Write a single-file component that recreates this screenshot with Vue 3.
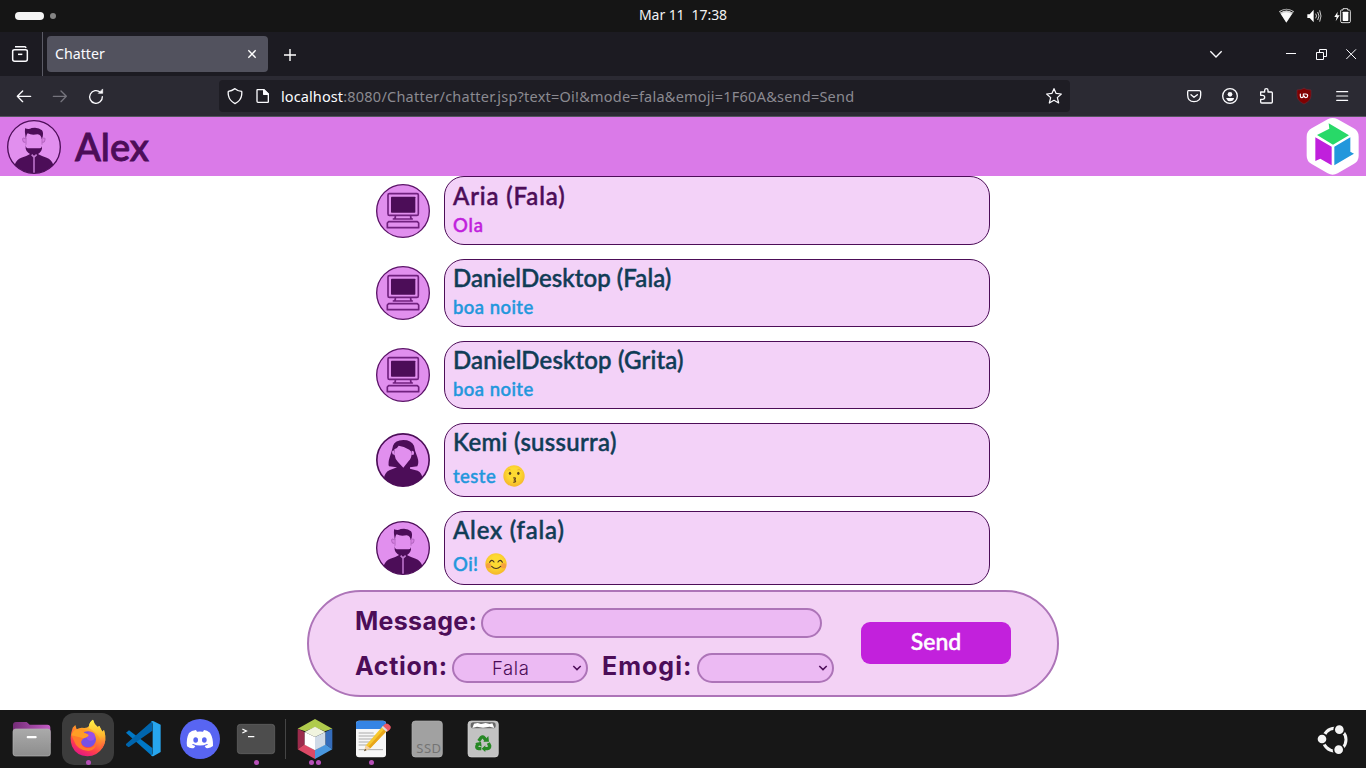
<script setup>
const messages = [
  { who: 'Aria (Fala)', text: 'Ola', avatar: 'pc', tone: 'own', fit: 'aria', size: 'first' },
  { who: 'DanielDesktop (Fala)', text: 'boa noite', avatar: 'pc', tone: 'other', fit: 'dfala', size: 'short' },
  { who: 'DanielDesktop (Grita)', text: 'boa noite', avatar: 'pc', tone: 'other', fit: 'dgrita', size: 'short' },
  { who: 'Kemi (sussurra)', text: 'teste', avatar: 'woman', tone: 'other', fit: 'kemi', size: 'tall', emoji: 'kiss' },
  { who: 'Alex (fala)', text: 'Oi!', avatar: 'man', tone: 'other', fit: 'alex', size: 'tall', emoji: 'smile' },
]
</script>

<template>
  <div class="desktop">
    <svg class="defs" width="0" height="0">
      <defs>
        <symbol id="pc" viewBox="0 0 162 162">
          <circle cx="81" cy="81" r="79" fill="#e18fee" stroke="#5b1268" stroke-width="4" />
          <g fill="none" stroke="#71217f" stroke-width="5" stroke-linejoin="round">
            <path d="M40 29H123Q127 29 127 33V89Q127 94 123 94H40Q36 94 36 89V33Q36 29 40 29Z" />
            <path d="M58 95V99Q58 105 52 105H109Q104 105 104 99V95M52 105H110" />
            <path d="M38 113H124L128 117V131H34V117Z" />
          </g>
          <rect x="45" y="38" width="73" height="48" rx="2" fill="#4c0d58" />
        </symbol>
        <symbol id="man" viewBox="0 0 162 162">
          <clipPath id="mc"><circle cx="81" cy="81" r="79" /></clipPath>
          <circle cx="81" cy="81" r="79" fill="#e18fee" />
          <g clip-path="url(#mc)">
            <path d="M68 96H94V103Q104 109 119 113Q133 118 138 132L144 162H18L24 132Q29 118 43 113Q60 108 68 103Z" fill="#4c0d58" />
            <path d="M55 46Q53 35 54 25Q66 30 74 24Q94 20 105 31Q110 37 107 51L104 58Q103 44 92 43Q73 47 62 40Q57 45 57 59Z" fill="#4c0d58" />
            <path d="M54 56Q46 50 47 60Q48 69 55 67M107 56Q115 50 114 60Q113 69 106 67" fill="#d67fe2" stroke="#a055ad" stroke-width="2" />
            <path d="M56 72Q56 86 64 85H97Q106 86 105 72V86Q101 103 82 104Q60 103 56 86Z" fill="#4c0d58" />
            <path d="M57 54V74M105 54V74" stroke="#a055ad" stroke-width="2" />
            <path d="M74 104L81 111L89 104M81 111V162" fill="none" stroke="#c078ce" stroke-width="5" />
            <path d="M81 112V162" stroke="#853893" stroke-width="1" />
          </g>
          <circle cx="81" cy="81" r="79" fill="none" stroke="#4c0d58" stroke-width="4" />
        </symbol>
        <symbol id="woman" viewBox="0 0 162 162">
          <clipPath id="wc"><circle cx="81" cy="81" r="79" /></clipPath>
          <circle cx="81" cy="81" r="78" fill="#e18fee" />
          <g clip-path="url(#wc)">
            <path d="M39 100Q35 91 42 70Q49 49 51 38Q57 22 82 21Q106 21 114 38Q116 52 124 72Q130 90 124 100L102 103V107L125 113Q138 119 139 136L146 162H18L24 136Q26 119 40 112L63 103Z" fill="#4c0d58" />
            <path d="M55 49Q64 46 68 38Q83 40 100 50Q107 54 107 62Q106 77 98 84L82 104L66 87Q57 78 55 63Z" fill="#e18fee" />
            <path d="M53 52Q45 54 50 64L57 66M107 53Q117 53 113 65L106 66" fill="#dc8cea" />
          </g>
          <circle cx="81" cy="81" r="78.5" fill="none" stroke="#4c0d58" stroke-width="5" />
        </symbol>
        <radialGradient id="yellow" cx=".5" cy=".4" r=".62">
          <stop offset=".45" stop-color="#fdda32" /><stop offset="1" stop-color="#f4b42a" />
        </radialGradient>
        <symbol id="kiss" viewBox="0 0 66 66">
          <circle cx="33" cy="33" r="32" fill="url(#yellow)" />
          <path d="M14 17Q18 11 23 15M43 15Q49 11 53 17" fill="none" stroke="#e0a52a" stroke-width="2" />
          <ellipse cx="21" cy="25" rx="3.6" ry="5" fill="#5a4320" /><ellipse cx="46" cy="25" rx="3.6" ry="5" fill="#5a4320" />
          <path d="M31 39Q38 37 37 42L34 45Q40 48 36 51L31 52" fill="none" stroke="#68451d" stroke-width="4" />
        </symbol>
        <symbol id="smile" viewBox="0 0 66 66">
          <circle cx="33" cy="33" r="32" fill="url(#yellow)" />
          <circle cx="11" cy="38" r="8" fill="#f58a45" opacity=".65" /><circle cx="55" cy="38" r="8" fill="#f58a45" opacity=".65" />
          <path d="M14 28Q20 17 27 27M39 27Q46 17 52 28M20 40Q33 53 47 40" fill="none" stroke="#4a3522" stroke-width="3.5" stroke-linecap="round" />
        </symbol>
      </defs>
    </svg>

    <div class="topbar">
      <div class="workspaces"><i class="pill"></i><i class="dot"></i></div>
      <div class="clock">Mar 11&nbsp; 17:38</div>
      <svg class="status" width="78" height="20" viewBox="0 0 234 60">
        <path d="M6 16Q28 0 51 16L28 50Z" fill="#cfcfcf" /><path d="M10 18Q28 6 47 18" fill="none" stroke="#151515" stroke-width="3" /><path d="M12 24Q28 13 44 24L28 49Z" fill="#fafafa" />
        <path d="M91 25H98L110 11V49L98 36H91Z" fill="#fff" />
        <path d="M116 23Q121 30 116 37M122 18Q130 30 122 42M128 13Q136 30 128 47" fill="none" stroke="#ccc" stroke-width="3" />
        <path d="M182 17L172 33H179L176 46L188 28H181Z" fill="#fff" />
        <path d="M193 12H198V8H212V12H217Q220 12 220 16V47Q220 50 216 50H195Q191 50 191 46V15Q191 12 193 12Z" fill="none" stroke="#ddd" stroke-width="3" /><rect x="197" y="17" width="17" height="28" rx="2" fill="#fff" />
      </svg>
    </div>

    <div class="tabs">
      <div class="recent"><svg width="18" height="18" viewBox="0 0 54 54" fill="none" stroke="#fbfbfe" stroke-width="4.5"><path d="M12 5H42Q44 5 45 9M5 19Q5 14 11 14H43Q49 14 49 19V43Q49 49 43 49H11Q5 49 5 43Z" /><path d="M21 28H34" /></svg></div>
      <div class="tab"><span>Chatter</span><svg width="10" height="10" viewBox="0 0 30 30"><path d="M4 4L26 26M26 4L4 26" stroke="#fff" stroke-width="4" /></svg></div>
      <svg class="plus" width="14" height="14" viewBox="0 0 14 14"><path d="M7 1V13M1 7H13" stroke="#fff" stroke-width="1.4" /></svg>
      <svg class="wintools" width="150" height="20" viewBox="0 0 450 60" fill="none" stroke="#fbfbfe">
        <path d="M7 22L24 39L41 22" stroke-width="4" />
        <path d="M234 28.500H264" stroke-width="3" /><path d="M325.500 25.500H346.500V46.500H325.500ZM334.500 24V16.500H355.500V37.500H348" stroke-width="3" />
        <path d="M415 16L444 45M444 16L415 45" stroke-width="3" />
      </svg>
    </div>

    <div class="nav">
      <svg class="navleft" width="100" height="20" viewBox="0 0 300 60" fill="none" stroke="#fbfbfe" stroke-width="4" stroke-linecap="round" stroke-linejoin="round">
        <path d="M38 31H77M53 15L37 31L53 47" /><path d="M145 31H184M168 15L184 31L168 47" stroke="#75747d" />
        <path d="M286 19A19 19 0 1 0 292 32" /><path d="M281 22H293V10Z" fill="#fbfbfe" stroke-width="2" />
      </svg>
      <div class="urlbar">
        <svg width="48" height="20" viewBox="0 0 144 60" fill="none" stroke="#fbfbfe" stroke-width="4" stroke-linejoin="round">
          <path d="M27 8Q37 16 47 16Q48 18 47 27Q45 44 27 53Q10 44 7 27Q6 18 7 16Q17 15 27 8Z" />
          <path d="M94 11H114L127 24V47Q127 49 125 49H96Q93 49 93 46V13Q93 11 94 11Z" /><path d="M113 11V25H127Z" fill="#fbfbfe" />
        </svg>
        <span class="url"><b>localhost</b>:8080/Chatter/chatter.jsp?text=Oi!&amp;mode=fala&amp;emoji=1F60A&amp;send=Send</span>
        <svg class="star" width="18" height="18" viewBox="0 0 54 54"><path d="M27 5L33 19L49 21L37 32L41 48L27 40L13 48L17 32L5 21L21 19Z" fill="none" stroke="#fbfbfe" stroke-width="3.700" stroke-linejoin="round" /></svg>
      </div>
      <svg class="navright" width="170" height="20" viewBox="0 0 510 60" fill="none" stroke="#fbfbfe" stroke-width="4" stroke-linejoin="round" stroke-linecap="round">
        <path d="M13 14H46Q50 14 50 18V27Q50 47 30 47Q11 47 11 27V18Q11 14 13 14ZM21 26L30 34L40 26" />
        <circle cx="138" cy="30" r="22" /><circle cx="138" cy="25" r="7" fill="#fbfbfe" stroke="none" /><path d="M126 37Q126 36 129 36H148Q151 36 150 39Q147 46 138 46Q130 46 126 37Z" fill="#fbfbfe" stroke="none" />
        <path d="M230 18H242V13Q242 8 247 8Q252 8 252 13V18H262Q265 18 265 21V48Q265 51 262 51H233Q230 51 230 48V40H236Q242 40 242 34Q242 28 236 28H230Z" />
        <path d="M360 7Q368 12 381 12V28Q381 45 360 54Q339 45 339 28V12Q352 12 360 7Z" fill="#800000" stroke="#6c2634" stroke-width="2" />
        <path d="M349 24V30Q349 35 353.500 35Q358 35 358 30V24M358 24H365Q371 24 371 29.500Q371 35 365.500 35Q361 35 361 30" stroke-width="3.500" />
        <path d="M458 17H491M458 30H491M458 43H491" stroke-width="3.600" />
      </svg>
    </div>

    <div class="header">
      <svg class="face"><use href="#man" /></svg>
      <h1>Alex</h1>
      <svg class="logo" width="54" height="59" viewBox="829 351 162 177">
        <path d="M894 358Q909 350 924 358L972 385Q987 393 987 410V467Q987 484 972 492L924 520Q909 528 894 520L846 492Q831 484 831 467V410Q831 393 846 385Z" fill="#fff" />
        <path d="M897 370L958 406L910 434L862 405L899 386Z" fill="#28d968" />
        <path d="M857 412L906 440V496L872 476L857 483Z" fill="#c020dc" />
        <path d="M914 440L962 412V455L973 461L961 468L914 496Z" fill="#2297dc" />
      </svg>
    </div>

    <main class="chat">
      <div v-for="(m, i) in messages" :key="i" class="row" :class="[m.size, m.tone]">
        <svg class="avatar"><use :href="'#' + m.avatar" /></svg>
        <div class="bubble">
          <div class="who"><span :class="m.fit">{{ m.who }}</span></div>
          <div class="text"><span>{{ m.text }}</span><svg v-if="m.emoji" class="emoji"><use :href="'#' + m.emoji" /></svg></div>
        </div>
      </div>
    </main>

    <div class="composer-wrap">
      <form class="composer" @submit.prevent>
        <div class="fields">
          <div class="line"><label class="l-msg">Message:</label><div class="field message"></div></div>
          <div class="line">
            <label class="l-act">Action:</label>
            <div class="field select"><span class="value">Fala</span><svg width="10" height="8" viewBox="0 0 10 8"><path d="M1.300 2L5 5.600L8.700 2" fill="none" stroke="#4c0d58" stroke-width="1.500" /></svg></div>
            <label class="l-emo">Emogi:</label>
            <div class="field select second"><svg width="10" height="8" viewBox="0 0 10 8"><path d="M1.300 2L5 5.600L8.700 2" fill="none" stroke="#4c0d58" stroke-width="1.500" /></svg></div>
          </div>
        </div>
        <button><span>Send</span></button>
      </form>
    </div>

    <div class="dock">
      <div class="app"><svg viewBox="0 0 156 156">
        <defs><linearGradient id="fold" x2="1" y2="0"><stop stop-color="#742c77" /><stop offset="1" stop-color="#c25dc4" /></linearGradient><linearGradient id="gray" x2="0" y2="1"><stop stop-color="#aaa" /><stop offset="1" stop-color="#8d8d8d" /></linearGradient></defs>
        <path d="M21 36Q21 27 30 27H62L71 35H124Q133 35 133 44V90H21Z" fill="url(#fold)" /><rect x="21" y="48" width="112" height="81" rx="8" fill="url(#gray)" stroke="#b7b7b7" stroke-width="2" /><rect x="62" y="69" width="30" height="7" rx="3" fill="#fff" />
      </svg></div>
      <div class="app active"><svg viewBox="0 0 156 156">
        <defs><linearGradient id="ff" x1=".8" y1="0" x2=".3" y2="1"><stop stop-color="#fff44f" /><stop offset=".4" stop-color="#ff9a25" /><stop offset=".75" stop-color="#ff3d4d" /><stop offset="1" stop-color="#e31587" /></linearGradient><linearGradient id="ff2" x2="0" y2="1"><stop stop-color="#fff247" /><stop offset=".55" stop-color="#ffb62e" /><stop offset="1" stop-color="#ff4a42" /></linearGradient></defs>
        <path d="M32 44L40 36L44 49Q54 42 67 45Q77 45 81 39Q82 27 93 20Q96 34 107 42L112 39L121 56L126 51Q136 82 122 104Q106 129 76 130Q43 129 30 100Q21 75 32 44Z" fill="url(#ff)" />
        <path d="M81 39Q82 27 93 20Q96 34 107 42L112 39L121 56L126 51Q137 88 118 108Q124 69 81 45Z" fill="url(#ff2)" />
        <circle cx="78" cy="79" r="24" fill="#7651e5" /><circle cx="86" cy="70" r="13" fill="#9a4fe8" />
        <path d="M28 67Q40 57 50 53Q62 52 67 60Q78 62 80 67Q77 73 65 76Q54 84 59 95Q67 106 82 105Q96 103 102 92Q101 111 79 114Q45 112 35 82Z" fill="#ff7a2a" />
        <path d="M28 67Q34 50 44 49Q58 47 67 60Q78 62 80 67Q77 73 65 76Q47 72 28 67Z" fill="#ff9d25" />
      </svg><i class="d"></i></div>
      <div class="app"><svg viewBox="0 0 156 156"><path d="M24 59L33 52L103 105V130Z" fill="#0078c6" /><path d="M24 93L103 24V53L34 101Q31 103 28 100L24 97Z" fill="#0065ad" /><path d="M99 27Q102 23 107 25L128 35V117L107 129Q102 131 99 126Q104 128 104 121V33Q104 26 99 27Z" fill="#27a6ee" /></svg></div>
      <div class="app"><svg viewBox="0 0 156 156"><circle cx="78" cy="78" r="60" fill="#5865f2" /><path d="M66 51Q52 53 45 60Q36 77 39 100Q49 108 60 105L64 99L54 95L57 93Q78 102 99 93L102 95L92 99L96 105Q108 107 117 99Q118 75 108 59Q99 52 90 51L87 56Q78 55 69 56Z" fill="#fff" /><ellipse cx="65" cy="81" rx="7" ry="8" fill="#5865f2" /><ellipse cx="91" cy="81" rx="7" ry="8" fill="#5865f2" /></svg></div>
      <div class="app"><svg viewBox="0 0 156 156"><rect x="22" y="34" width="112" height="88" rx="9" fill="#4d4d4d" stroke="#686868" stroke-width="2" /><path d="M37 48L49 54L37 60M54 71H73" fill="none" stroke="#fff" stroke-width="4" /></svg><i class="d"></i></div>
      <div class="sep"></div>
      <div class="app"><svg viewBox="0 0 156 156"><path d="M78 18L130 47L107 55L78 43L49 55L26 47Z" fill="#afcb4c" /><path d="M26 47L47 57V94L26 109Z" fill="#9c2b4c" /><path d="M130 47L109 57V94L130 109Z" fill="#346cbb" /><path d="M26 109L47 94L78 112V138Z" fill="#dc4966" /><path d="M130 109L109 94L78 112V138Z" fill="#4997df" /><path d="M78 41L109 57L78 72L47 57Z" fill="#f1f4df" /><path d="M47 57L78 72V112L47 95Z" fill="#fff" /><path d="M109 57L78 72V112L109 95Z" fill="#cfdae7" /></svg><i class="d pair"></i></div>
      <div class="app"><svg viewBox="0 0 156 156"><rect x="33" y="23" width="90" height="110" rx="9" fill="#f6f6f6" /><path d="M33 48V32Q33 23 42 23H114Q123 23 123 32V48Z" fill="#3584e4" /><path d="M41 60H86M41 69H90M41 78H90M41 87H82M41 96H74M41 110H114" stroke="#aaa" stroke-width="3" /><path d="M57 115L63 97L113 40L127 52L76 106Z" fill="#f6c82e" /><path d="M70 101L120 46L127 52L76 106Z" fill="#e8a51b" /><path d="M57 115L63 97L76 106Z" fill="#f3d0a6" /><path d="M57 115L60 108L65 111Z" fill="#333" /><path d="M113 40L120 33Q128 29 134 37Q141 43 134 50L127 56Z" fill="#ec5965" /><path d="M110 43L114 39L128 52L124 57Z" fill="#ddd" /></svg><i class="d"></i></div>
      <div class="app"><svg viewBox="0 0 156 156"><rect x="33" y="24" width="91" height="108" rx="10" fill="#a1a1a1" stroke="#b4b4b4" stroke-width="2" /><text x="46" y="119" class="ssd">SSD</text></svg></div>
      <div class="app"><svg viewBox="0 0 156 156"><rect x="33" y="24" width="91" height="108" rx="10" fill="#c2c2c2" stroke="#d5d5d5" stroke-width="2" /><rect x="41" y="28" width="75" height="18" rx="8" fill="#666" /><path d="M46 45L51 32L62 30L72 33L86 30L98 33L106 31L112 45L98 41L78 44L60 41Z" fill="#fff" />
        <g fill="none" stroke="#278825" stroke-width="10"><path d="M65 84L73 73Q77 69 82 75L87 83" /><path d="M94 90L98 98Q99 106 91 107H82" /><path d="M73 107H65Q57 106 60 98L64 91" /></g><path d="M79 86L96 86L94 69ZM85 97V117L74 107ZM54 91L72 86L74 101Z" fill="#278825" /></svg></div>
      <svg class="ubuntu" width="34" height="34" viewBox="110 50 102 102"><circle cx="166" cy="103" r="34" fill="none" stroke="#f4f4f4" stroke-width="9" /><g fill="#f4f4f4" stroke="#171717" stroke-width="5"><circle cx="128" cy="101" r="15.500" /><circle cx="180" cy="73" r="15.500" /><circle cx="178" cy="133" r="15.500" /></g></svg>
    </div>
  </div>
</template>

<style>
html, body { margin: 0; overflow: hidden; }
</style>

<style scoped>
.desktop { width: 1366px; height: 768px; display: flex; flex-direction: column; background: #fff; overflow: hidden; font-family: "Noto Sans", sans-serif; }
.defs { position: absolute; }
.desktop * { box-sizing: border-box; }
svg { display: block; flex: none; }
.topbar { height: 32px; background: #151515; display: grid; grid-template-columns: 1fr auto 1fr; align-items: center; flex: none; }
.workspaces { display: flex; align-items: center; gap: 6px; padding-left: 15px; }
.pill { width: 29px; height: 8px; border-radius: 4px; background: #f4f4f4; }
.dot { width: 6px; height: 6px; border-radius: 3px; background: #858585; }
.clock { color: #f2f2f2; font-size: 14px; line-height: 20px; letter-spacing: -0.08px; padding-bottom: 2px; }
.status { justify-self: end; margin-right: 11px; }
.tabs { height: 44px; background: #1c1b22; display: flex; align-items: center; flex: none; }
.recent { width: 43px; height: 44px; border-right: 1px solid #5b5b66; padding: 13px 0 0 11px; }
.tab { margin-left: 4px; width: 221px; height: 36px; border-radius: 4px; background: #52525e; color: #fbfbfe; font-size: 14.2px; display: flex; align-items: center; justify-content: space-between; padding: 0 11px 0 8px; }
.tab span { padding-bottom: 2px; }
.plus { margin-left: 15px; margin-top: 1px; }
.wintools { margin-left: auto; margin-right: 8px; }
.nav { height: 41px; background: #2b2a33; border-bottom: 1px solid #55545f; display: flex; align-items: center; flex: none; }
.navleft { margin-left: 5px; }
.urlbar { margin-left: 114px; width: 851px; height: 32px; border-radius: 4px; background: #1e1d24; display: flex; align-items: center; padding-left: 7px; }
.url { margin-left: 7px; font-size: 14.5px; line-height: 20px; color: #8b8a91; white-space: nowrap; letter-spacing: 0.23px; }
.url b { font-weight: 400; color: #fbfbfe; letter-spacing: 0.1px; }
.star { margin-left: auto; margin-right: 7px; }
.navright { margin-left: auto; margin-right: 12px; }
.header { height: 59px; background: #da7ae8; display: flex; align-items: center; flex: none; }
.face { width: 54px; height: 54px; margin-left: 7px; margin-top: 1px; }
h1 { margin: -2px 0 0 14px; font: 500 38px/44px Lato, sans-serif; color: #4c0d58; -webkit-text-stroke: 0.9px currentColor; }
.logo { margin-left: auto; margin-right: 6px; }
.chat { width: 614px; margin-left: 376px; height: 414px; display: flex; flex-direction: column; gap: 14px; flex: none; }
.row { display: flex; align-items: center; gap: 14px; flex: none; height: 68px; }
.row.first { height: 69px; }
.row.tall { height: 74px; }
.avatar { width: 54px; height: 54px; }
.bubble { flex: 1; height: 100%; border: 1px solid #4c0d58; border-radius: 20px; background: #f3d2f8; padding: 4px 8px; font-family: Lato, sans-serif; font-weight: 500; white-space: nowrap; -webkit-text-stroke: 0.5px currentColor; }
.first .bubble { padding-top: 5px; }
.who { font-size: 24px; line-height: 28px; color: #103c56; }
.aria { letter-spacing: 0.85px; }
.dfala { letter-spacing: 0.07px; }
.dgrita { letter-spacing: 0.15px; }
.kemi { letter-spacing: 0.3px; }
.alex { letter-spacing: 0.8px; }
.text { font-size: 18.5px; line-height: 30px; color: #2297dc; display: flex; align-items: center; gap: 6.5px; letter-spacing: 0.45px; -webkit-text-stroke: 0.45px currentColor; }
.tall .text { line-height: 40px; }
.own .who { color: #4c0d58; }
.own .text { color: #c020dc; letter-spacing: 0.8px; }
.emoji { width: 22px; height: 22px; }
.composer-wrap { height: 120px; padding-left: 307px; flex: none; }
.composer { width: 752px; height: 107px; border: 2px solid #ad74b8; border-radius: 54px; background: #f3d2f5; display: flex; align-items: flex-start; justify-content: space-between; padding: 16px 46px; }
.fields { display: flex; flex-direction: column; gap: 15px; }
.line { display: flex; height: 30px; }
label { color: #4c0d58; font: 700 25px/26px Inter, sans-serif; white-space: nowrap; flex: none; }
.l-msg { width: 126px; letter-spacing: 0.3px; }
.l-act { width: 97px; letter-spacing: 0.7px; }
.l-emo { width: 95px; margin-left: 14px; letter-spacing: 1px; }
.field { height: 30px; border: 2px solid #ad74b8; border-radius: 15px; background: #ecbaf3; }
.message { width: 341px; }
.select { width: 136px; display: flex; align-items: center; justify-content: flex-end; padding-right: 4px; font: 300 18.5px/26px Inter, sans-serif; color: #4c0d58; }
.second { width: 137px; }
.value { flex: 1; padding-left: 38px; letter-spacing: 0.6px; }
button { width: 150px; height: 42px; margin-top: 14px; border: 0; border-radius: 9px; background: #c221dc; color: #fff; font: 500 23px/38px Lato, sans-serif; padding: 0 0 4px; -webkit-text-stroke: 0.5px currentColor; }
.dock { height: 58px; background: #171717; padding: 0 16px 0 6px; display: flex; align-items: center; gap: 4px; flex: none; }
.app { width: 52px; height: 52px; border-radius: 12px; position: relative; }
.app svg { width: 52px; height: 52px; }
.active { background: #3c3c3c; }
.d { position: absolute; bottom: 0; left: 23.5px; width: 5px; height: 5px; border-radius: 2.5px; background: #b74fb8; }
.pair { left: 20px; box-shadow: 7px 0 #b74fb8; }
.sep { width: 1px; height: 40px; background: #454545; margin: 0 -1px; }
.ssd { font: 39px "Noto Sans", sans-serif; letter-spacing: 1.5px; fill: #747474; }
.ubuntu { margin-left: auto; }
</style>
